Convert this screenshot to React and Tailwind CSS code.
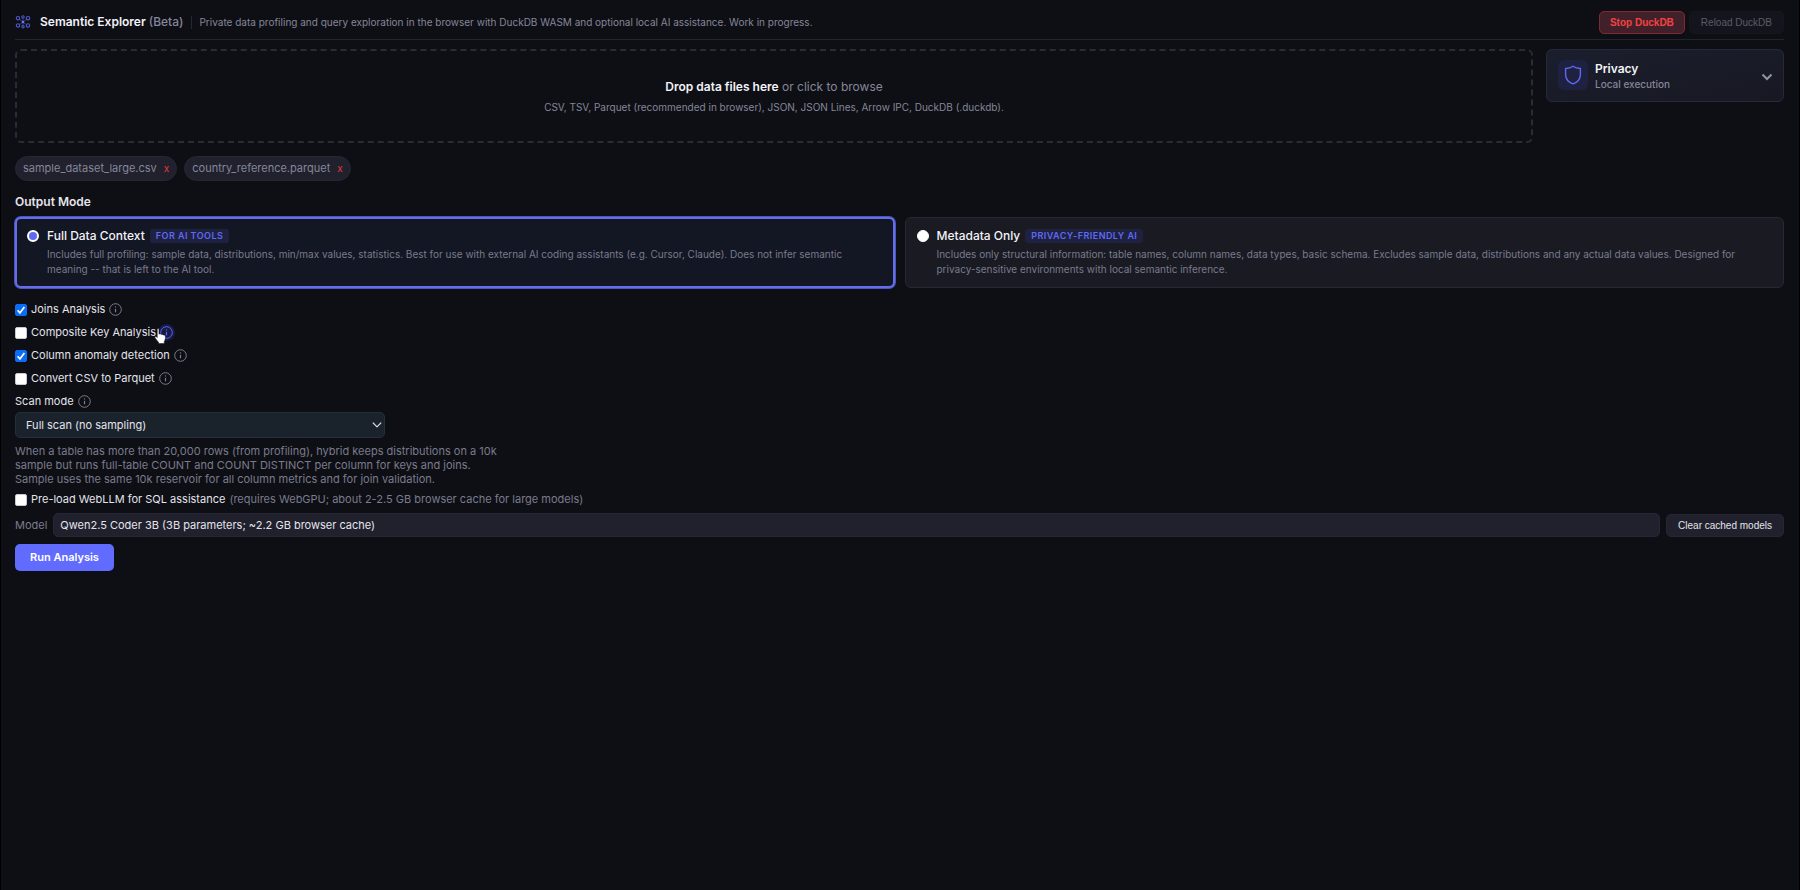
import { useState } from "react";

const FILES = ["sample_dataset_large.csv", "country_reference.parquet"];

const MODES = [
  {
    id: "full",
    title: "Full Data Context",
    badge: "For AI tools",
    text: "Includes full profiling: sample data, distributions, min/max values, statistics. Best for use with external AI coding assistants (e.g. Cursor, Claude). Does not infer semantic meaning -- that is left to the AI tool.",
  },
  {
    id: "metadata",
    title: "Metadata Only",
    badge: "Privacy-friendly AI",
    text: "Includes only structural information: table names, column names, data types, basic schema. Excludes sample data, distributions and any actual data values. Designed for privacy-sensitive environments with local semantic inference.",
  },
];

const OPTIONS = [
  { id: "joins", label: "Joins Analysis", checked: true },
  { id: "composite", label: "Composite Key Analysis", checked: false, hovered: true },
  { id: "anomaly", label: "Column anomaly detection", checked: true },
  { id: "parquet", label: "Convert CSV to Parquet", checked: false },
];

export default function App() {
  const [files, setFiles] = useState(FILES);
  const [mode, setMode] = useState("full");

  return (
    <div className="min-h-screen border-x border-black bg-[#0e0f14] pr-[15px] pl-[14px] font-['Inter',sans-serif] text-[11px] text-[#e4e4ed]">
      <Header />

      <main>
        <div className="mt-[9px] flex items-start gap-[13px]">
          <label className="flex h-[94px] flex-1 cursor-pointer flex-col items-center justify-center gap-[5px] rounded-md border-2 border-dashed border-[#2a2b37] pt-px text-[#85869a]">
            <span className="text-[12px] leading-[16px]">
              <strong className="font-semibold text-[#f2f2f8]">Drop data files here</strong> or click to browse
            </span>
            <span className="text-[10px] leading-[15px]">
              CSV, TSV, Parquet (recommended in browser), JSON, JSON Lines, Arrow IPC, DuckDB (.duckdb).
            </span>
            <input type="file" multiple className="sr-only" />
          </label>
          <PrivacyCard />
        </div>

        <ul className="mt-[13px] flex gap-[7px]">
          {files.map((name) => (
            <li
              key={name}
              className="flex h-[25px] items-center gap-[7px] rounded-full border border-[#262733] bg-[#20212c] px-[7px] text-[#85869a]"
            >
              {name}
              <button
                type="button"
                aria-label={`Remove ${name}`}
                className="text-[10px] text-[#e5383b]"
                onClick={() => setFiles(files.filter((f) => f !== name))}
              >
                x
              </button>
            </li>
          ))}
        </ul>

        <h2 className="mt-[13px] text-[12px] leading-[16px] font-semibold">Output Mode</h2>
        <div className="mt-[7px] grid grid-cols-2 gap-[10px]">
          {MODES.map((m) => (
            <ModeCard key={m.id} mode={m} selected={mode === m.id} onSelect={() => setMode(m.id)} />
          ))}
        </div>

        <div className="mt-[14px] flex flex-col gap-2">
          {OPTIONS.map((o) => (
            <div key={o.id} className="flex h-[15px] items-center gap-1">
              <label className="flex items-center gap-1">
                <Checkbox defaultChecked={o.checked} />
                {o.label}
              </label>
              <InfoButton label={o.label} hovered={o.hovered} />
            </div>
          ))}
        </div>

        <div className="mt-2 flex h-[15px] items-center gap-1">
          <label htmlFor="scan-mode">Scan mode</label>
          <InfoButton label="Scan mode" />
        </div>
        <div className="mt-[3px] grid w-[370px] items-center">
          <select
            id="scan-mode"
            className="col-start-1 row-start-1 h-[26px] appearance-none rounded-[5px] border border-[#23303b] bg-[#1a222c] px-[10px]"
          >
            <option>Full scan (no sampling)</option>
            <option>Hybrid</option>
            <option>Sample</option>
          </select>
          <svg viewBox="0 0 10 6" className="pointer-events-none col-start-1 row-start-1 mr-[3px] h-[6px] w-[10px] justify-self-end" fill="none">
            <path d="M1.2 1 5 4.8 8.8 1" stroke="#d5d5de" strokeWidth="1.2" strokeLinecap="round" strokeLinejoin="round" />
          </svg>
        </div>
        <p className="mt-[6px] w-[490px] leading-[14px] text-[#7a7b8d]">
          When a table has more than 20,000 rows (from profiling), hybrid keeps distributions on a 10k sample but runs full-table COUNT and COUNT DISTINCT per column for keys and joins. Sample uses the same 10k reservoir for all column metrics and for join validation.
        </p>

        <label className="mt-[6px] flex h-[15px] items-center gap-1">
          <Checkbox />
          Pre-load WebLLM for SQL assistance
          <span className="text-[#7a7b8d]">(requires WebGPU; about 2-2.5 GB browser cache for large models)</span>
        </label>

        <div className="mt-[6px] flex items-center gap-[6px]">
          <label htmlFor="model" className="text-[#7a7b8d]">
            Model
          </label>
          <select
            id="model"
            className="h-6 flex-1 appearance-none rounded-[5px] border border-[#262733] bg-[#20212c] px-[6px]"
          >
            <option>Qwen2.5 Coder 3B (3B parameters; ~2.2 GB browser cache)</option>
          </select>
          <button
            type="button"
            className="h-[23px] rounded-[5px] border border-[#262733] bg-[#20212c] px-[11px] font-['Liberation_Sans',Arial,sans-serif] text-[10px]"
          >
            Clear cached models
          </button>
        </div>

        <button
          type="button"
          className="mt-[7px] h-[27px] rounded-[5px] bg-[#616cff] px-[15px] font-semibold text-white"
        >
          Run Analysis
        </button>
      </main>
    </div>
  );
}

function Header() {
  return (
    <header className="flex h-10 items-center border-b border-[#23242e] pt-[5px]">
      <Logo />
      <h1 className="ml-[9px] text-[12px] font-semibold text-[#f2f2f8]">
        Semantic Explorer <span className="font-medium text-[#85869a]">(Beta)</span>
      </h1>
      <p className="ml-2 border-l border-[#262733] pl-[7px] text-[10px] leading-[13px] text-[#85869a]">
        Private data profiling and query exploration in the browser with DuckDB WASM and optional local AI assistance. Work in progress.
      </p>
      <div className="ml-auto flex gap-1 font-['Liberation_Sans',Arial,sans-serif] text-[10px]">
        <button type="button" className="h-[23px] rounded-[5px] border border-[#7c2b33] bg-[#42202a] px-[10px] font-bold text-[#f04444]">
          Stop DuckDB
        </button>
        <button type="button" disabled className="h-[23px] rounded-[5px] border border-[#16171e] bg-[#14151c] px-[11px] text-[#5b5c67]">
          Reload DuckDB
        </button>
      </div>
    </header>
  );
}

function PrivacyCard() {
  return (
    <button
      type="button"
      aria-expanded="false"
      className="flex h-[53px] w-[238px] items-center rounded-md border border-[#272938] bg-linear-to-br from-[#1b1e2d] to-[#171822] pr-[10px] pl-[11px] text-left"
    >
      <span className="mb-[2px] flex size-[30px] items-center justify-center rounded-md bg-[#1f2140]">
        <svg viewBox="0 0 18 20" className="h-5 w-[18px]" fill="none">
          <path
            d="M9 1.2C7 2.6 4.5 3.3 1.6 3.5V9.5C1.6 14 4.5 17.2 9 18.9C13.5 17.2 16.4 14 16.4 9.5V3.5C13.5 3.3 11 2.6 9 1.2Z"
            stroke="#5f69f2"
            strokeWidth="1.4"
            strokeLinejoin="round"
          />
        </svg>
      </span>
      <span className="ml-[7px] flex flex-col">
        <span className="text-[12px] leading-[17px] font-semibold text-[#f2f2f8]">Privacy</span>
        <span className="text-[10px] leading-[15px] font-medium text-[#85869a]">Local execution</span>
      </span>
      <svg viewBox="0 0 12 8" className="mt-[2px] ml-auto h-2 w-3" fill="none">
        <path d="M1.5 1.5 6 6 10.5 1.5" stroke="#9293a3" strokeWidth="2" />
      </svg>
    </button>
  );
}

function ModeCard({ mode, selected, onSelect }) {
  return (
    <label
      className={`flex h-[71px] gap-2 rounded-md ${
        selected
          ? "border-2 border-[#656ee8] bg-[#131623] pt-[9px] pr-6 pl-[10px] ring-1 ring-[#4c54bd]"
          : "border border-[#272832] bg-[#191a22] pt-[10px] pr-6 pl-[11px]"
      }`}
    >
      <input
        type="radio"
        name="output-mode"
        checked={selected}
        onChange={onSelect}
        className="mt-[2px] size-3 shrink-0 appearance-none rounded-full border border-white bg-white checked:border-2 checked:bg-[#5f69f2]"
      />
      <span>
        <span className="flex items-center gap-[5px]">
          <span className="text-[12px] leading-[16px] font-medium text-[#f2f2f8]">{mode.title}</span>
          <span className="rounded-[3px] bg-[#1e2140] px-[6px] text-[9px] leading-[14px] font-semibold tracking-wider text-[#5f69f2] uppercase">
            {mode.badge}
          </span>
        </span>
        <span className="mt-[3px] block text-[10px] leading-[15px] text-[#7a7b8d]">{mode.text}</span>
      </span>
    </label>
  );
}

function Checkbox({ defaultChecked = false }) {
  return (
    <span className="grid size-3 shrink-0">
      <input
        type="checkbox"
        defaultChecked={defaultChecked}
        className="peer col-start-1 row-start-1 size-3 appearance-none rounded-[2px] border border-[#c9c9cf] bg-white checked:border-[#0b6cf5] checked:bg-[#0b6cf5]"
      />
      <svg viewBox="0 0 12 12" className="pointer-events-none invisible col-start-1 row-start-1 size-3 peer-checked:visible" fill="none">
        <path d="M2.6 6.3 4.9 8.9 9.4 2.9" stroke="#fff" strokeWidth="1.7" />
      </svg>
    </span>
  );
}

function InfoButton({ label, hovered }) {
  return (
    <button
      type="button"
      aria-label={`About ${label}`}
      className={`relative size-[13px] rounded-full ${hovered ? "bg-[#171b45] text-[#5f69f2] ring-2 ring-[#171b45]" : "text-[#7a7b8d]"}`}
    >
      <svg viewBox="0 0 13 13" className="size-[13px]" fill="none" stroke="currentColor">
        <circle cx="6.5" cy="6.5" r="5.8" />
        <path d="M6.5 5.8V9.3" strokeWidth="1.2" />
        <circle cx="6.5" cy="3.9" r="0.7" fill="currentColor" stroke="none" />
      </svg>
      {hovered && <HandCursor />}
    </button>
  );
}

function HandCursor() {
  return (
    <svg viewBox="0 0 13 17" className="absolute top-[2px] -left-[6px] h-[17px] w-[13px]">
      <path
        d="M3.2 1.5C3.2 0.3 5 0.3 5 1.5V6.2C5.6 5.5 6.8 5.6 7.1 6.5C7.8 6 8.9 6.2 9.2 7C10.2 6.6 11.4 7.2 11.4 8.3C11.6 10.5 11.2 12.2 10.3 13.4V15.6H4.5V14.2C3.3 13 2.2 11.3 1 9.7C0.4 8.7 1.6 8 2.4 8.7L3.2 9.5Z"
        fill="#fff"
        stroke="#15161c"
        strokeWidth="0.6"
      />
    </svg>
  );
}

function Logo() {
  return (
    <svg viewBox="0 0 16 14" className="h-[14px] w-4" fill="none" stroke="#5058c8" strokeWidth="1.1">
      <circle cx="3" cy="3.2" r="1.7" />
      <circle cx="8" cy="2" r="1.2" />
      <circle cx="13" cy="3.2" r="1.7" />
      <circle cx="3" cy="10.4" r="1.7" />
      <circle cx="8" cy="11.8" r="1.2" />
      <circle cx="13" cy="10.4" r="1.7" />
      <path d="M8 3.5V10.5M4.6 4.3 7 6M11.4 4.3 9 6M4.6 9.5 7 8M11.4 9.5 9 8" strokeWidth="0.6" />
      <circle cx="8" cy="7" r="1.3" fill="#6f78ff" stroke="none" />
    </svg>
  );
}
